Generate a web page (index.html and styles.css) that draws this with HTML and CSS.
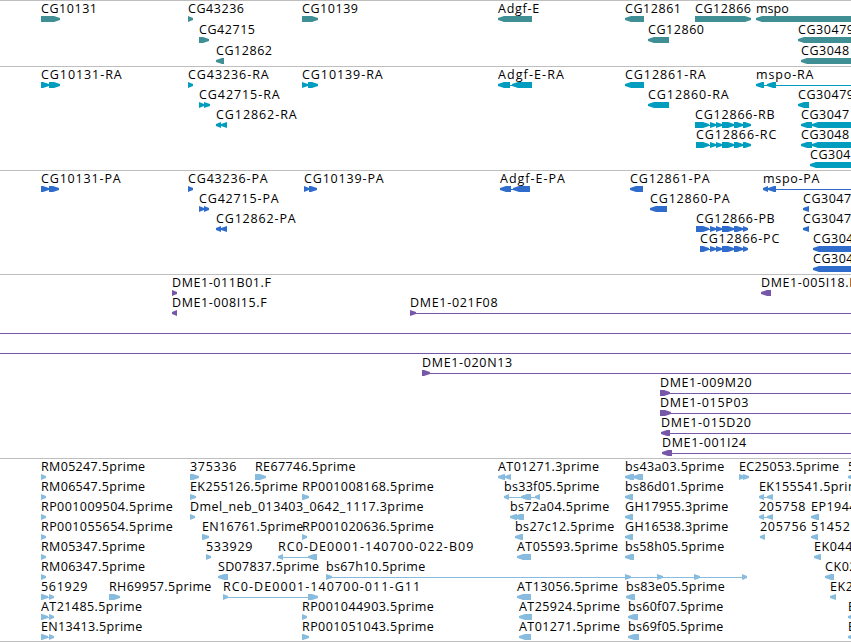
FILE: index.html
```html
<!DOCTYPE html>
<html lang="en">
  <head>
    <meta charset="UTF-8" />
    <meta name="viewport" content="width=device-width, initial-scale=1.0" />
    <title>Genome tracks</title>
    <link rel="stylesheet" href="styles.css">
  </head>
  <body>
    <main class="browser"></main>
    <script src="tracks.js"></script>
  </body>
</html>
```
FILE: styles.css
```css
* {
  margin: 0;
  padding: 0;
  box-sizing: border-box;
}

body {
  background-color: #ffffff;
  overflow: hidden;
}

.browser {
  display: flex;
  flex-direction: column;
  width: 851px;
  height: 642px;
  border-bottom: 1px solid #bebebe;
}

.track {
  border-top: 1px solid #bebebe;
  overflow: hidden;
}

.track svg {
  display: block;
  width: 100%;
  height: 100%;
}

.track text {
  font-family: "Open Sans", "DejaVu Sans", sans-serif;
  font-size: 12.5px;
  fill: #000000;
}

.genes {
  height: 66px;
  color: #3f8f94;
}

.transcripts {
  height: 104px;
  color: #009dbf;
}

.proteins {
  height: 104px;
  color: #306ccc;
}

.bacs {
  height: 184px;
  color: #7757a8;
}

.ests {
  height: 183px;
  color: #87bcde;
}

.shape {
  fill: currentColor;
}
```
FILE: tracks.js
```js
// each feature: [label, strand, start, end, start, end, ...]
const tracks = [
  {
    name: "genes",
    step: 21,
    rows: [
      [
        ["CG10131", 1, 41, 60], ["CG43236", 1, 188, 193], ["CG10139", 1, 302, 318],
        ["Adgf-E", -1, 498, 532], ["CG12861", -1, 625, 644], ["CG12866", 1, 695, 751],
        ["mspo", -1, 756, 860],
      ],
      [["CG42715", 1, 199, 209], ["CG12860", -1, 648, 669], ["CG30479", -1, 798, 860]],
      [["CG12862", -1, 216, 224], ["CG3048", -1, 801, 860]],
    ],
  },
  {
    name: "transcripts",
    step: 20,
    rows: [
      [
        ["CG10131-RA", 1, 41, 49, 49, 60], ["CG43236-RA", 1, 188, 193],
        ["CG10139-RA", 1, 302, 308, 308, 318], ["Adgf-E-RA", -1, 498, 510, 512, 532],
        ["CG12861-RA", -1, 625, 644], ["mspo-RA", -1, 756, 764, 767, 776, 860, 866],
      ],
      [["CG42715-RA", 1, 199, 204, 204, 210], ["CG12860-RA", -1, 648, 669], ["CG30479", -1, 798, 809]],
      [
        ["CG12862-RA", -1, 216, 221, 221, 227],
        ["CG12866-RB", 1, 695, 709, 710, 716, 716, 722, 722, 734, 734, 743, 743, 751],
        ["CG3047", -1, 801, 812, 812, 860],
      ],
      [
        ["CG12866-RC", 1, 696, 709, 710, 716, 716, 722, 722, 734, 734, 743, 743, 751],
        ["CG3048", -1, 801, 812, 812, 860],
      ],
      [["CG304", -1, 810, 860]],
    ],
  },
  {
    name: "proteins",
    step: 20,
    rows: [
      [
        ["CG10131-PA", 1, 41, 49, 49, 59], ["CG43236-PA", 1, 188, 193],
        ["CG10139-PA", 1, 304, 309, 309, 317], ["Adgf-E-PA", -1, 500, 511, 513, 530],
        ["CG12861-PA", -1, 630, 643], ["mspo-PA", -1, 763, 768, 768, 776, 860, 866],
      ],
      [["CG42715-PA", 1, 199, 204, 204, 209], ["CG12860-PA", -1, 650, 667], ["CG3047", -1, 803, 809]],
      [
        ["CG12862-PA", -1, 216, 221, 221, 227],
        ["CG12866-PB", 1, 696, 709, 710, 716, 716, 722, 722, 734, 734, 743, 743, 748],
        ["CG3047", -1, 803, 809],
      ],
      [
        ["CG12866-PC", 1, 700, 709, 710, 716, 716, 722, 722, 734, 734, 743, 743, 748],
        ["CG304", -1, 813, 860],
      ],
      [["CG304", -1, 813, 860]],
    ],
  },
  {
    name: "bacs",
    step: 20,
    rows: [
      [["DME1-011B01.F", 1, 172, 177], ["DME1-005I18.F", -1, 761, 771]],
      [["DME1-008I15.F", -1, 172, 177], ["DME1-021F08", 1, 410, 416, 860, 866]],
      [["", 1, -10, -5, 860, 866]],
      [["", 1, -10, -5, 860, 866]],
      [["DME1-020N13", 1, 422, 430, 860, 866]],
      [["DME1-009M20", 1, 660, 670, 860, 866]],
      [["DME1-015P03", 1, 660, 671, 860, 866]],
      [["DME1-015D20", -1, 661, 670, 860, 866]],
      [["DME1-001I24", -1, 662, 672, 860, 866]],
    ],
  },
  {
    name: "ests",
    step: 20,
    rows: [
      [
        ["RM05247.5prime", 1, 41, 46], ["375336", 1, 190, 199], ["RE67746.5prime", 1, 255, 266],
        ["AT01271.3prime", -1, 498, 505, 505, 511], ["bs43a03.5prime", -1, 625, 634, 633, 643],
        ["EC25053.5prime", 1, 739, 745, 743, 749], ["5", -1, 848, 854],
      ],
      [
        ["RM06547.5prime", 1, 41, 46], ["EK255126.5prime", 1, 190, 196],
        ["RP001008168.5prime", 1, 302, 309], ["bs33f05.5prime", -1, 504, 509, 521, 531, 535, 540],
        ["bs86d01.5prime", -1, 625, 633], ["EK155541.5prime", -1, 759, 764, 767, 773],
      ],
      [
        ["RP001009504.5prime", 1, 41, 46], ["Dmel_neb_013403_0642_1117.3prime", 1, 190, 195],
        ["bs72a04.5prime", -1, 510, 517, 514, 524], ["GH17955.3prime", -1, 625, 633],
        ["205758", -1, 759, 764, 767, 773], ["EP1944", -1, 811, 819],
      ],
      [
        ["RP001055654.5prime", 1, 41, 46], ["EN16761.5prime", 1, 202, 209],
        ["RP001020636.5prime", 1, 302, 307], ["bs27c12.5prime", -1, 515, 523],
        ["GH16538.3prime", -1, 625, 633], ["205756", -1, 760, 765], ["51452", -1, 811, 818],
      ],
      [
        ["RM05347.5prime", 1, 41, 46], ["533929", 1, 206, 211],
        ["RC0-DE0001-140700-022-B09", -1, 278, 283, 308, 317], ["AT05593.5prime", -1, 517, 531],
        ["bs58h05.5prime", -1, 625, 634], ["EK044", -1, 814, 821],
      ],
      [
        ["RM06347.5prime", 1, 41, 46], ["SD07837.5prime", -1, 218, 228],
        ["bs67h10.5prime", 1, 326, 332, 625, 631, 657, 663, 694, 700, 742, 747],
        ["CK02", -1, 825, 834],
      ],
      [
        ["561929", 1, 41, 48, 49, 54], ["RH69957.5prime", 1, 109, 120],
        ["RC0-DE0001-140700-011-G11", 1, 223, 228, 308, 318], ["AT13056.5prime", -1, 517, 531],
        ["bs83e05.5prime", -1, 626, 635], ["EK2", -1, 830, 836],
      ],
      [
        ["AT21485.5prime", 1, 41, 48, 49, 54], ["RP001044903.5prime", 1, 302, 307],
        ["AT25924.5prime", -1, 519, 532], ["bs60f07.5prime", -1, 628, 638], ["E", -1, 848, 854],
      ],
      [
        ["EN13413.5prime", 1, 41, 48, 49, 54], ["RP001051043.5prime", 1, 302, 309],
        ["AT01271.5prime", -1, 519, 531], ["bs69f05.5prime", -1, 628, 639], ["E", -1, 848, 854],
      ],
    ],
  },
];

// label widths: glyph advances in px
const advances = {
  C: 8, G: 9.2, A: 8.4, R: 8.4, P: 7.4, B: 7.4, D: 9, M: 10.6, E: 7, F: 6.6, I: 3.2, N: 9.2,
  K: 8, T: 7.6, S: 7, H: 8.9, ".": 3.9, "-": 7.9, _: 6.2,
  p: 7.6, r: 5, i: 3.4, m: 11.4, e: 7.3, s: 6.4, f: 3.8, g: 6.9, d: 7.2, l: 3.4, o: 7.4,
};

function labelWidth(label) {
  return [...label].reduce((sum, c) => sum + (advances[c] || 7.75), 0);
}

function arrow(start, end, strand, y) {
  const head = Math.min(6, end - start);
  const tip = strand > 0 ? end : start;
  const neck = strand > 0 ? end - head : start + head;
  const tail = strand > 0 ? start : end;
  const points = `${tail},${y} ${neck},${y} ${tip},${y + 2} ${tip},${y + 4} ${neck},${y + 6} ${tail},${y + 6}`;
  return `<polygon class="shape" points="${points}" />`;
}

function feature([label, strand, ...spans], top) {
  const last = spans[spans.length - 1];
  let shapes = "";
  if (spans.length > 2) {
    shapes += `<rect class="shape" x="${spans[0]}" y="${top + 18}" width="${last - spans[0]}" height="1" />`;
  }
  for (let i = 0; i < spans.length; i += 2) {
    shapes += arrow(spans[i], spans[i + 1], strand, top + 15);
  }
  if (label) {
    shapes += `<text x="${spans[0]}" y="${top + 12}" textLength="${labelWidth(label).toFixed(1)}">${label}</text>`;
  }
  return shapes;
}

const browser = document.querySelector(".browser");
tracks.forEach((track) => {
  const body = track.rows.map((row, i) => row.map((f) => feature(f, i * track.step)).join("")).join("");
  browser.insertAdjacentHTML("beforeend", `<section class="track ${track.name}"><svg>${body}</svg></section>`);
});
```
